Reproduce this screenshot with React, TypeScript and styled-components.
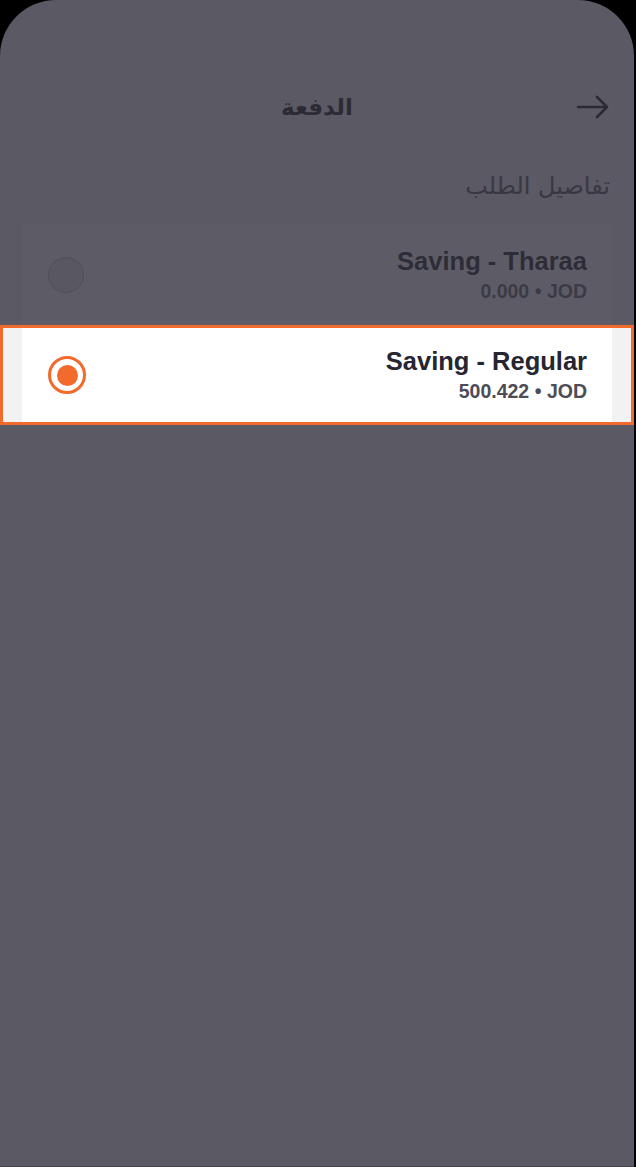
import React from "react";
import styled, { createGlobalStyle } from "styled-components";

const GlobalStyle = createGlobalStyle`
  html, body {
    margin: 0;
    padding: 0;
    background: #000000;
  }
  body {
    font-family: "Liberation Sans", Arial, sans-serif;
  }
`;

type Account = {
  name: string;
  balance: string;
  currency: string;
  selected?: boolean;
};

const accounts: Account[] = [
  { name: "Saving - Tharaa", balance: "0.000", currency: "JOD" },
  { name: "Saving - Regular", balance: "500.422", currency: "JOD", selected: true },
];

function App() {
  return (
    <>
      <GlobalStyle />
      <Screen>
        <Header>
          <HeaderSpacer />
          <Title>الدفعة</Title>
          <BackButton aria-label="back">
            <svg width="34" height="34" viewBox="0 0 34 34" fill="none">
              <path
                d="M2 17h29M21 7l10 10-10 10"
                stroke="#2c2b34"
                strokeWidth="2.6"
                strokeLinecap="round"
                strokeLinejoin="round"
              />
            </svg>
          </BackButton>
        </Header>
        <SectionLabel>تفاصيل الطلب</SectionLabel>
        <List>
          {accounts.map((a) => (
            <Row key={a.name} selected={a.selected}>
              <Card selected={a.selected}>
                <Radio selected={a.selected}>{a.selected && <RadioDot />}</Radio>
                <Info>
                  <AccountName selected={a.selected}>{a.name}</AccountName>
                  <Balance selected={a.selected}>
                    {a.balance} • {a.currency}
                  </Balance>
                </Info>
              </Card>
            </Row>
          ))}
        </List>
      </Screen>
    </>
  );
}

const Screen = styled.div`
  width: 634px;
  height: 1166px;
  background: #5b5a64;
  border-radius: 56px 56px 0 0;
  border-bottom: 1px solid #45444e;
  overflow: hidden;
  display: flex;
  flex-direction: column;
`;

const Header = styled.div`
  display: grid;
  grid-template-columns: 80px 1fr 80px;
  align-items: center;
  height: 60px;
  margin-top: 77px;
  padding: 0 24px;
`;

const HeaderSpacer = styled.div``;

const Title = styled.h1`
  margin: 0;
  text-align: center;
  font-family: "DejaVu Sans", "Noto Sans", sans-serif;
  font-weight: 700;
  font-size: 23px;
  color: #2c2b34;
  direction: rtl;
`;

const BackButton = styled.div`
  display: flex;
  justify-content: flex-end;
  align-items: center;
`;

const SectionLabel = styled.div`
  margin-top: 30px;
  padding: 0 24px;
  text-align: right;
  direction: rtl;
  font-family: "DejaVu Sans", "Noto Sans", sans-serif;
  font-size: 24px;
  color: #393842;
  height: 38px;
  line-height: 38px;
`;

const List = styled.div`
  margin-top: 20px;
  display: flex;
  flex-direction: column;
`;

const Row = styled.div<{ selected?: boolean }>`
  height: 100px;
  box-sizing: border-box;
  display: flex;
  padding: 0 ${(p) => (p.selected ? "19px" : "22px")};
  background: ${(p) => (p.selected ? "#f2f2f2" : "transparent")};
  border: ${(p) => (p.selected ? "3px solid #f26a2c" : "none")};
`;

const Card = styled.div<{ selected?: boolean }>`
  flex: 1;
  display: flex;
  align-items: center;
  justify-content: space-between;
  padding: 0 25px 0 26px;
  background: ${(p) => (p.selected ? "#ffffff" : "#5d5c66")};
`;

const Radio = styled.div<{ selected?: boolean }>`
  width: ${(p) => (p.selected ? "38px" : "36px")};
  height: ${(p) => (p.selected ? "38px" : "36px")};
  box-sizing: border-box;
  border-radius: 50%;
  display: flex;
  align-items: center;
  justify-content: center;
  border: ${(p) => (p.selected ? "3.5px solid #f26a2c" : "1px solid #504f59")};
  background: ${(p) => (p.selected ? "#ffffff" : "#595862")};
`;

const RadioDot = styled.div`
  width: 21px;
  height: 21px;
  border-radius: 50%;
  background: #f26a2c;
`;

const Info = styled.div`
  display: flex;
  flex-direction: column;
  align-items: flex-end;
  gap: 5px;
  margin-top: -2px;
`;

const AccountName = styled.div<{ selected?: boolean }>`
  font-weight: 700;
  font-size: 25.5px;
  line-height: 28px;
  color: ${(p) => (p.selected ? "#262532" : "#2e2d37")};
`;

const Balance = styled.div<{ selected?: boolean }>`
  font-weight: 700;
  font-size: 19.5px;
  line-height: 22px;
  color: ${(p) => (p.selected ? "#4d4c57" : "#3c3b45")};
`;

export default App;
